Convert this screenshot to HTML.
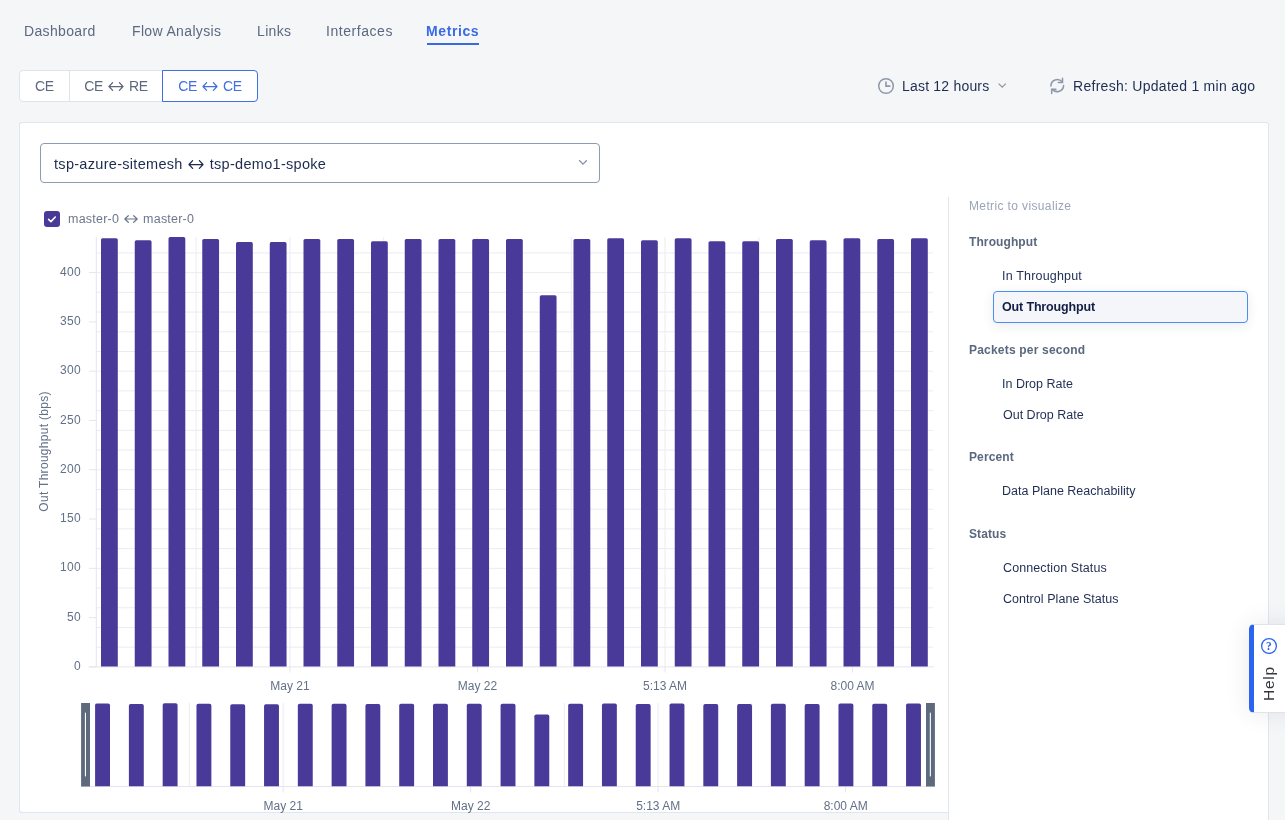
<!DOCTYPE html>
<html><head><meta charset="utf-8">
<style>
html,body{margin:0;padding:0;width:1285px;height:820px;overflow:hidden;background:#f5f6f8;font-family:"Liberation Sans",sans-serif;}
.t{position:absolute;white-space:nowrap;line-height:1;will-change:transform;}
.tab{font-size:14px;color:#5b6a82;letter-spacing:0.35px;top:24.1px;}
.it{font-size:12.5px;color:#1f2d53;}
.hd{font-size:12px;color:#5a687f;font-weight:bold;letter-spacing:0.1px;}
</style></head><body>
<!-- tabs -->
<div class="t tab" style="left:23.5px">Dashboard</div>
<div class="t tab" style="left:132.1px">Flow Analysis</div>
<div class="t tab" style="left:256.5px">Links</div>
<div class="t tab" style="left:325.6px;letter-spacing:0.55px">Interfaces</div>
<div class="t tab" style="left:425.9px;color:#3a6ae4;font-weight:bold;letter-spacing:0.6px">Metrics</div>
<div style="position:absolute;left:427px;top:43px;width:52px;height:2px;background:#3a6ae0"></div>

<!-- segmented -->
<div style="position:absolute;left:19px;top:70px;width:237px;height:30px;border:1px solid #dfe3eb;border-radius:4px;background:#fff"></div>
<div style="position:absolute;left:69px;top:71px;width:1px;height:30px;background:#dfe3eb"></div>
<div style="position:absolute;left:162px;top:70px;width:94px;height:30px;border:1px solid #3f6fe0;border-radius:0 4px 4px 0;background:#fff"></div>
<div class="t" style="left:19px;width:51px;text-align:center;top:79.2px;font-size:14px;color:#5c687d;letter-spacing:-0.3px">CE</div>
<div class="t" style="left:70px;width:92px;text-align:center;top:79.2px;font-size:14px;color:#5c687d;letter-spacing:-0.3px">CE<svg style="display:inline-block;vertical-align:0.3px;margin:0 5px 0 5px" width="16" height="9" viewBox="0 0 16 9"><path d="M1 4.5H15 M4.6 0.6L1 4.5L4.6 8.4 M11.4 0.6L15 4.5L11.4 8.4" fill="none" stroke="#5c687d" stroke-width="1.25" stroke-linejoin="round" stroke-linecap="round"/></svg>RE</div>
<div class="t" style="left:163px;width:94px;text-align:center;top:79.2px;font-size:14px;color:#3f6fe0;letter-spacing:-0.3px">CE<svg style="display:inline-block;vertical-align:0.3px;margin:0 5px 0 5px" width="16" height="9" viewBox="0 0 16 9"><path d="M1 4.5H15 M4.6 0.6L1 4.5L4.6 8.4 M11.4 0.6L15 4.5L11.4 8.4" fill="none" stroke="#3f6fe0" stroke-width="1.25" stroke-linejoin="round" stroke-linecap="round"/></svg>CE</div>

<!-- time range -->
<svg style="position:absolute;left:876px;top:76px" width="20" height="20" viewBox="0 0 20 20"><circle cx="10" cy="10" r="7.3" fill="none" stroke="#8c98ab" stroke-width="1.5"/><path d="M10 5.6V10.1H14.4" fill="none" stroke="#8c98ab" stroke-width="1.6"/></svg>
<div class="t" style="left:901.6px;top:79.2px;font-size:14px;color:#1f2d52;letter-spacing:0.2px">Last 12 hours</div>
<svg style="position:absolute;left:996px;top:80px" width="12" height="10" viewBox="0 0 12 10"><path d="M2.6 3.6L6.2 7.2L9.8 3.6" fill="none" stroke="#8c98ab" stroke-width="1.3"/></svg>
<svg style="position:absolute;left:1047px;top:76px" width="20" height="20" viewBox="0 0 20 20"><g fill="none" stroke="#8c98ab" stroke-width="1.55" stroke-linecap="round"><path d="M3.9 10A6.4 6.4 0 0 1 15.1 5.8"/><path d="M16.6 9.6A6.4 6.4 0 0 1 5.6 13.6"/><path d="M15.5 2.2V6.4H11.3"/><path d="M4.7 17.5V13.3H8.9"/></g></svg>
<div class="t" style="left:1072.8px;top:79.2px;font-size:14px;color:#1f2d52;letter-spacing:0.28px">Refresh: Updated 1 min ago</div>

<!-- card -->
<div style="position:absolute;left:19px;top:122px;width:929px;height:689px;border:1px solid #e0e5ef;border-right:none;border-radius:3px 0 0 3px;background:#fff"></div>
<div style="position:absolute;left:948px;top:122px;width:320px;height:720px;border:1px solid #e0e5ef;border-left:none;border-radius:0 3px 0 0;background:#fff"></div>
<div style="position:absolute;left:948px;top:197px;width:1px;height:640px;background:#e1e5ee"></div>

<!-- dropdown -->
<div style="position:absolute;left:40px;top:143px;width:558px;height:38px;border:1px solid #8f9bb0;border-radius:4px;background:#fff"></div>
<div class="t" style="left:53.5px;top:157.3px;font-size:14.5px;color:#1e2b4f;letter-spacing:0.3px">tsp-azure-sitemesh<svg style="display:inline-block;vertical-align:0px;margin:0 5.5px 0 5.5px" width="16" height="9" viewBox="0 0 16 9"><path d="M1 4.5H15 M4.6 0.6L1 4.5L4.6 8.4 M11.4 0.6L15 4.5L11.4 8.4" fill="none" stroke="#1e2b4f" stroke-width="1.25" stroke-linejoin="round" stroke-linecap="round"/></svg>tsp-demo1-spoke</div>
<svg style="position:absolute;left:576px;top:156px" width="14" height="12" viewBox="0 0 14 12"><path d="M3.2 4.3L7 8.1L10.8 4.3" fill="none" stroke="#8692a6" stroke-width="1.3"/></svg>

<!-- legend -->
<div style="position:absolute;left:44px;top:211px;width:16px;height:16px;border-radius:3px;background:#493a99"></div>
<svg style="position:absolute;left:44px;top:211px" width="16" height="16" viewBox="0 0 16 16"><path d="M4.6 8.4L6.9 10.6L11.3 6" fill="none" stroke="#fff" stroke-width="1.6" stroke-linecap="round" stroke-linejoin="round"/></svg>
<div class="t" style="left:68px;top:213.2px;font-size:12.5px;color:#6b778c;letter-spacing:0.22px">master-0<svg style="display:inline-block;vertical-align:0px;margin:0 5px 0 5px" width="14" height="8" viewBox="0 0 14 8"><path d="M0.8 4.0H13.2 M4.3 0.7L0.8 4.0L4.3 7.3 M9.7 0.7L13.2 4.0L9.7 7.3" fill="none" stroke="#6b778c" stroke-width="1.2" stroke-linejoin="round" stroke-linecap="round"/></svg>master-0</div>

<svg width="1285" height="820" style="position:absolute;left:0;top:0">
<g stroke="#eaecf2" stroke-width="1"><line x1="96" x2="933" y1="647.19" y2="647.19"/><line x1="96" x2="933" y1="627.47" y2="627.47"/><line x1="96" x2="933" y1="607.76" y2="607.76"/><line x1="96" x2="933" y1="588.04" y2="588.04"/><line x1="96" x2="933" y1="568.33" y2="568.33"/><line x1="96" x2="933" y1="548.62" y2="548.62"/><line x1="96" x2="933" y1="528.90" y2="528.90"/><line x1="96" x2="933" y1="509.19" y2="509.19"/><line x1="96" x2="933" y1="489.47" y2="489.47"/><line x1="96" x2="933" y1="469.76" y2="469.76"/><line x1="96" x2="933" y1="450.05" y2="450.05"/><line x1="96" x2="933" y1="430.33" y2="430.33"/><line x1="96" x2="933" y1="410.62" y2="410.62"/><line x1="96" x2="933" y1="390.90" y2="390.90"/><line x1="96" x2="933" y1="371.19" y2="371.19"/><line x1="96" x2="933" y1="351.48" y2="351.48"/><line x1="96" x2="933" y1="331.76" y2="331.76"/><line x1="96" x2="933" y1="312.05" y2="312.05"/><line x1="96" x2="933" y1="292.33" y2="292.33"/><line x1="96" x2="933" y1="272.62" y2="272.62"/><line x1="96" x2="933" y1="252.91" y2="252.91"/></g>
<g stroke="#eaecf2" stroke-width="1"><line x1="102.35" x2="102.35" y1="237" y2="666.5"/><line x1="196.13" x2="196.13" y1="237" y2="666.5"/><line x1="289.91" x2="289.91" y1="237" y2="666.5"/><line x1="383.69" x2="383.69" y1="237" y2="666.5"/><line x1="477.47" x2="477.47" y1="237" y2="666.5"/><line x1="571.25" x2="571.25" y1="237" y2="666.5"/><line x1="665.03" x2="665.03" y1="237" y2="666.5"/><line x1="758.81" x2="758.81" y1="237" y2="666.5"/><line x1="852.59" x2="852.59" y1="237" y2="666.5"/></g>
<g stroke="#e3e6ee" stroke-width="1"><line x1="96.3" x2="96.3" y1="237" y2="667"/><line x1="89" x2="934" y1="666.9" y2="666.9"/>
<line x1="89" x2="96" y1="666.90" y2="666.90"/>
<line x1="89" x2="96" y1="617.62" y2="617.62"/>
<line x1="89" x2="96" y1="568.33" y2="568.33"/>
<line x1="89" x2="96" y1="519.04" y2="519.04"/>
<line x1="89" x2="96" y1="469.76" y2="469.76"/>
<line x1="89" x2="96" y1="420.47" y2="420.47"/>
<line x1="89" x2="96" y1="371.19" y2="371.19"/>
<line x1="89" x2="96" y1="321.90" y2="321.90"/>
<line x1="89" x2="96" y1="272.62" y2="272.62"/>
<line x1="289.91" x2="289.91" y1="666.5" y2="672.5"/>
<line x1="477.47" x2="477.47" y1="666.5" y2="672.5"/>
<line x1="665.03" x2="665.03" y1="666.5" y2="672.5"/>
<line x1="852.59" x2="852.59" y1="666.5" y2="672.5"/>
</g>
<g fill="#493a99"><path d="M101.00,666.50V239.80Q101.00,238.20 102.60,238.20H116.20Q117.80,238.20 117.80,239.80V666.50Z"/><path d="M134.75,666.50V241.90Q134.75,240.30 136.35,240.30H149.95Q151.55,240.30 151.55,241.90V666.50Z"/><path d="M168.50,666.50V238.70Q168.50,237.10 170.10,237.10H183.70Q185.30,237.10 185.30,238.70V666.50Z"/><path d="M202.25,666.50V240.60Q202.25,239.00 203.85,239.00H217.45Q219.05,239.00 219.05,240.60V666.50Z"/><path d="M236.00,666.50V243.70Q236.00,242.10 237.60,242.10H251.20Q252.80,242.10 252.80,243.70V666.50Z"/><path d="M269.75,666.50V243.70Q269.75,242.10 271.35,242.10H284.95Q286.55,242.10 286.55,243.70V666.50Z"/><path d="M303.50,666.50V240.60Q303.50,239.00 305.10,239.00H318.70Q320.30,239.00 320.30,240.60V666.50Z"/><path d="M337.25,666.50V240.60Q337.25,239.00 338.85,239.00H352.45Q354.05,239.00 354.05,240.60V666.50Z"/><path d="M371.00,666.50V242.80Q371.00,241.20 372.60,241.20H386.20Q387.80,241.20 387.80,242.80V666.50Z"/><path d="M404.75,666.50V240.60Q404.75,239.00 406.35,239.00H419.95Q421.55,239.00 421.55,240.60V666.50Z"/><path d="M438.50,666.50V240.60Q438.50,239.00 440.10,239.00H453.70Q455.30,239.00 455.30,240.60V666.50Z"/><path d="M472.25,666.50V240.60Q472.25,239.00 473.85,239.00H487.45Q489.05,239.00 489.05,240.60V666.50Z"/><path d="M506.00,666.50V240.60Q506.00,239.00 507.60,239.00H521.20Q522.80,239.00 522.80,240.60V666.50Z"/><path d="M539.75,666.50V296.90Q539.75,295.30 541.35,295.30H554.95Q556.55,295.30 556.55,296.90V666.50Z"/><path d="M573.50,666.50V240.60Q573.50,239.00 575.10,239.00H588.70Q590.30,239.00 590.30,240.60V666.50Z"/><path d="M607.25,666.50V239.80Q607.25,238.20 608.85,238.20H622.45Q624.05,238.20 624.05,239.80V666.50Z"/><path d="M641.00,666.50V241.90Q641.00,240.30 642.60,240.30H656.20Q657.80,240.30 657.80,241.90V666.50Z"/><path d="M674.75,666.50V239.80Q674.75,238.20 676.35,238.20H689.95Q691.55,238.20 691.55,239.80V666.50Z"/><path d="M708.50,666.50V242.80Q708.50,241.20 710.10,241.20H723.70Q725.30,241.20 725.30,242.80V666.50Z"/><path d="M742.25,666.50V242.80Q742.25,241.20 743.85,241.20H757.45Q759.05,241.20 759.05,242.80V666.50Z"/><path d="M776.00,666.50V240.60Q776.00,239.00 777.60,239.00H791.20Q792.80,239.00 792.80,240.60V666.50Z"/><path d="M809.75,666.50V241.90Q809.75,240.30 811.35,240.30H824.95Q826.55,240.30 826.55,241.90V666.50Z"/><path d="M843.50,666.50V239.80Q843.50,238.20 845.10,238.20H858.70Q860.30,238.20 860.30,239.80V666.50Z"/><path d="M877.25,666.50V240.70Q877.25,239.10 878.85,239.10H892.45Q894.05,239.10 894.05,240.70V666.50Z"/><path d="M911.00,666.50V239.80Q911.00,238.20 912.60,238.20H926.20Q927.80,238.20 927.80,239.80V666.50Z"/></g>
<g fill="#627088" font-family="Liberation Sans" font-size="12" letter-spacing="0.3"><text x="81" y="670.00" text-anchor="end">0</text><text x="81" y="620.72" text-anchor="end">50</text><text x="81" y="571.43" text-anchor="end">100</text><text x="81" y="522.14" text-anchor="end">150</text><text x="81" y="472.86" text-anchor="end">200</text><text x="81" y="423.57" text-anchor="end">250</text><text x="81" y="374.29" text-anchor="end">300</text><text x="81" y="325.00" text-anchor="end">350</text><text x="81" y="275.72" text-anchor="end">400</text></g>
<g fill="#627088" font-family="Liberation Sans" font-size="12"><text x="289.91" y="690" text-anchor="middle">May 21</text><text x="283.15" y="810" text-anchor="middle">May 21</text><text x="477.47" y="690" text-anchor="middle">May 22</text><text x="470.65" y="810" text-anchor="middle">May 22</text><text x="665.03" y="690" text-anchor="middle">5:13 AM</text><text x="658.15" y="810" text-anchor="middle">5:13 AM</text><text x="852.59" y="690" text-anchor="middle">8:00 AM</text><text x="845.65" y="810" text-anchor="middle">8:00 AM</text></g>
<text transform="translate(48,451.4) rotate(-90)" text-anchor="middle" fill="#627088" font-family="Liberation Sans" font-size="12" letter-spacing="0.3">Out Throughput (bps)</text>
<g stroke="#eaecf2" stroke-width="1"><line x1="95.65" x2="95.65" y1="703" y2="786.5"/><line x1="189.40" x2="189.40" y1="703" y2="786.5"/><line x1="283.15" x2="283.15" y1="703" y2="786.5"/><line x1="376.90" x2="376.90" y1="703" y2="786.5"/><line x1="470.65" x2="470.65" y1="703" y2="786.5"/><line x1="564.40" x2="564.40" y1="703" y2="786.5"/><line x1="658.15" x2="658.15" y1="703" y2="786.5"/><line x1="751.90" x2="751.90" y1="703" y2="786.5"/><line x1="845.65" x2="845.65" y1="703" y2="786.5"/></g>
<g stroke="#e3e6ee" stroke-width="1"><line x1="81" x2="935" y1="786.5" y2="786.5"/>
<line x1="283.15" x2="283.15" y1="786.5" y2="792.5"/>
<line x1="470.65" x2="470.65" y1="786.5" y2="792.5"/>
<line x1="658.15" x2="658.15" y1="786.5" y2="792.5"/>
<line x1="845.65" x2="845.65" y1="786.5" y2="792.5"/>
</g>
<g fill="#493a99"><path d="M95.10,786.30V705.33Q95.10,703.53 96.90,703.53H108.20Q110.00,703.53 110.00,705.33V786.30Z"/><path d="M128.89,786.30V705.73Q128.89,703.93 130.69,703.93H141.99Q143.79,703.93 143.79,705.73V786.30Z"/><path d="M162.68,786.30V705.11Q162.68,703.31 164.48,703.31H175.78Q177.58,703.31 177.58,705.11V786.30Z"/><path d="M196.47,786.30V705.48Q196.47,703.68 198.27,703.68H209.57Q211.37,703.68 211.37,705.48V786.30Z"/><path d="M230.26,786.30V706.08Q230.26,704.28 232.06,704.28H243.36Q245.16,704.28 245.16,706.08V786.30Z"/><path d="M264.05,786.30V706.08Q264.05,704.28 265.85,704.28H277.15Q278.95,704.28 278.95,706.08V786.30Z"/><path d="M297.84,786.30V705.48Q297.84,703.68 299.64,703.68H310.94Q312.74,703.68 312.74,705.48V786.30Z"/><path d="M331.63,786.30V705.48Q331.63,703.68 333.43,703.68H344.73Q346.53,703.68 346.53,705.48V786.30Z"/><path d="M365.42,786.30V705.90Q365.42,704.10 367.22,704.10H378.52Q380.32,704.10 380.32,705.90V786.30Z"/><path d="M399.21,786.30V705.48Q399.21,703.68 401.01,703.68H412.31Q414.11,703.68 414.11,705.48V786.30Z"/><path d="M433.00,786.30V705.48Q433.00,703.68 434.80,703.68H446.10Q447.90,703.68 447.90,705.48V786.30Z"/><path d="M466.79,786.30V705.48Q466.79,703.68 468.59,703.68H479.89Q481.69,703.68 481.69,705.48V786.30Z"/><path d="M500.58,786.30V705.48Q500.58,703.68 502.38,703.68H513.68Q515.48,703.68 515.48,705.48V786.30Z"/><path d="M534.37,786.30V716.36Q534.37,714.56 536.17,714.56H547.47Q549.27,714.56 549.27,716.36V786.30Z"/><path d="M568.16,786.30V705.48Q568.16,703.68 569.96,703.68H581.26Q583.06,703.68 583.06,705.48V786.30Z"/><path d="M601.95,786.30V705.33Q601.95,703.53 603.75,703.53H615.05Q616.85,703.53 616.85,705.33V786.30Z"/><path d="M635.74,786.30V705.73Q635.74,703.93 637.54,703.93H648.84Q650.64,703.93 650.64,705.73V786.30Z"/><path d="M669.53,786.30V705.33Q669.53,703.53 671.33,703.53H682.63Q684.43,703.53 684.43,705.33V786.30Z"/><path d="M703.32,786.30V705.90Q703.32,704.10 705.12,704.10H716.42Q718.22,704.10 718.22,705.90V786.30Z"/><path d="M737.11,786.30V705.90Q737.11,704.10 738.91,704.10H750.21Q752.01,704.10 752.01,705.90V786.30Z"/><path d="M770.90,786.30V705.48Q770.90,703.68 772.70,703.68H784.00Q785.80,703.68 785.80,705.48V786.30Z"/><path d="M804.69,786.30V705.73Q804.69,703.93 806.49,703.93H817.79Q819.59,703.93 819.59,705.73V786.30Z"/><path d="M838.48,786.30V705.33Q838.48,703.53 840.28,703.53H851.58Q853.38,703.53 853.38,705.33V786.30Z"/><path d="M872.27,786.30V705.50Q872.27,703.70 874.07,703.70H885.37Q887.17,703.70 887.17,705.50V786.30Z"/><path d="M906.06,786.30V705.33Q906.06,703.53 907.86,703.53H919.16Q920.96,703.53 920.96,705.33V786.30Z"/></g>
<rect x="81.1" y="703" width="8.9" height="83.5" fill="#5d6a7d"/>
<rect x="84.89999999999999" y="712.7" width="1.1" height="63.7" fill="#ffffff"/>
<rect x="926" y="703" width="8.9" height="83.5" fill="#5d6a7d"/>
<rect x="929.8" y="712.7" width="1.1" height="63.7" fill="#ffffff"/>
</svg>

<!-- sidebar -->
<div class="t" style="left:968.8px;top:199.7px;font-size:12px;color:#9aa5b7;letter-spacing:0.37px">Metric to visualize</div>
<div class="t hd" style="left:969.2px;top:235.6px;">Throughput</div>
<div class="t it" style="left:1002.1px;top:269.8px;letter-spacing:0.18px">In Throughput</div>
<div style="position:absolute;left:993px;top:291px;width:253px;height:30px;border:1px solid #4b8df2;border-radius:4px;background:#f5f6f9;box-shadow:0 3px 12px rgba(30,40,80,0.09)"></div>
<div class="t" style="left:1002.3px;top:301.2px;font-size:12.5px;color:#131f45;font-weight:bold;letter-spacing:-0.15px">Out Throughput</div>
<div class="t hd" style="left:969.2px;top:343.7px;letter-spacing:0.2px">Packets per second</div>
<div class="t it" style="left:1002.1px;top:377.6px;">In Drop Rate</div>
<div class="t it" style="left:1002.6px;top:409px;">Out Drop Rate</div>
<div class="t hd" style="left:968.6px;top:451px;">Percent</div>
<div class="t it" style="left:1002.3px;top:484.8px;">Data Plane Reachability</div>
<div class="t hd" style="left:969.2px;top:527.9px;">Status</div>
<div class="t it" style="left:1003.0px;top:561.5px;letter-spacing:0.1px">Connection Status</div>
<div class="t it" style="left:1003.0px;top:592.6px;letter-spacing:0.05px">Control Plane Status</div>

<!-- help tab -->
<div style="position:absolute;left:1249px;top:624px;width:50px;height:87px;border-radius:5px 0 0 5px;background:#fff;border:1px solid #dfe3eb;border-left:5px solid #2d64ef;box-shadow:0 0 24px rgba(40,50,90,0.10)"></div>
<svg style="position:absolute;left:1259px;top:636px" width="20" height="20" viewBox="0 0 20 20"><circle cx="10" cy="10" r="7.4" fill="none" stroke="#2d64ef" stroke-width="1.3"/><text x="9.9" y="13.6" text-anchor="middle" font-family="Liberation Serif" font-size="11.5" font-weight="bold" fill="#2d64ef">?</text></svg>
<div class="t" style="left:1248px;top:676px;width:40px;text-align:center;font-size:15.5px;color:#34373d;will-change:auto;transform:rotate(-90deg);transform-origin:20px 7.5px;letter-spacing:0.8px">Help</div>
</body></html>
